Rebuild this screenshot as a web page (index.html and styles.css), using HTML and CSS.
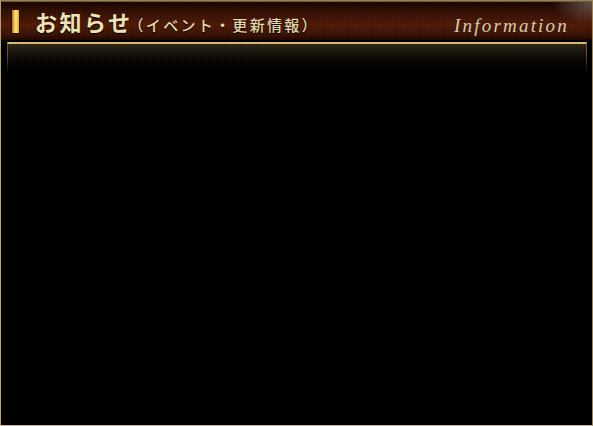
FILE: index.html
```html
<!DOCTYPE html>
<html lang="ja">
<head>
<meta charset="utf-8">
<link rel="stylesheet" href="styles.css">
</head>
<body>
<div class="frame">
  <div class="head">
    <span class="mark"></span>
    <h2 class="title">お知らせ<span class="sub">（イベント・更新情報）</span></h2>
    <span class="en">Information</span>
  </div>
  <div class="panel">
    <div class="panel-top"></div>
  </div>
</div>
</body>
</html>
```
FILE: styles.css
```css
html, body {
  margin: 0;
  padding: 0;
  background: #000;
}
.frame {
  width: 593px;
  height: 426px;
  box-sizing: border-box;
  border: 1px solid #9a8250;
  border-left-color: #b8a070;
  border-bottom-color: #c8b488;
  background: #000;
  display: flex;
  flex-direction: column;
}
.head {
  height: 39px;
  flex: none;
  display: flex;
  align-items: center;
  padding: 0 0 0 11px;
  box-sizing: border-box;
  border-top: 1px solid #6a5a38;
  background:
    repeating-linear-gradient(90deg, rgba(0,0,0,0.12) 0 1px, rgba(0,0,0,0) 1px 3px),
    radial-gradient(ellipse 40px 22px at 100% 0%, rgba(190,180,170,0.45), rgba(190,180,170,0) 100%),
    linear-gradient(180deg, #1a0702 0%, #3a1206 30%, #521c08 60%, #3e1506 85%, #1c0803 100%);
}
.mark {
  width: 7px;
  height: 23px;
  flex: none;
  background: linear-gradient(90deg, #b86a10 0%, #f6c44a 35%, #ffe690 55%, #e8a028 100%);
  box-shadow: 0 0 0 1px #2a1004;
}
.title {
  margin: 0 0 0 16px;
  font-family: "Noto Sans CJK JP", "Noto Sans CJK SC", sans-serif;
  font-weight: 700;
  font-size: 22px;
  line-height: 1;
  color: #efe3b8;
  letter-spacing: 2.5px;
  text-shadow: 0 1px 1px #000;
  white-space: nowrap;
}
.sub {
  font-size: 15px;
  font-weight: 500;
  letter-spacing: 2.3px;
  margin-left: -4px;
  color: #e6d8ac;
}
.en {
  margin-left: auto;
  margin-right: 23px;
  margin-top: 9px;
  font-family: "Liberation Serif", serif;
  font-style: italic;
  font-size: 19px;
  letter-spacing: 2.2px;
  color: #d6ccb0;
}
.panel {
  flex: 1;
  margin: 2px 5px 0 6px;
  position: relative;
}
.panel-top {
  height: 30px;
  border-top: 2px solid #d8b868;
  border-left: 1px solid #6a5228;
  border-right: 1px solid #6a5228;
  background:
    repeating-linear-gradient(90deg, rgba(0,0,0,0.35) 0 1px, rgba(0,0,0,0) 1px 2px),
    linear-gradient(180deg, #3a3020 0%, #1a150c 30%, #000 100%);
  -webkit-mask-image: linear-gradient(180deg, #000 0%, #000 40%, transparent 100%);
  mask-image: linear-gradient(180deg, #000 0%, #000 40%, transparent 100%);
}
```
